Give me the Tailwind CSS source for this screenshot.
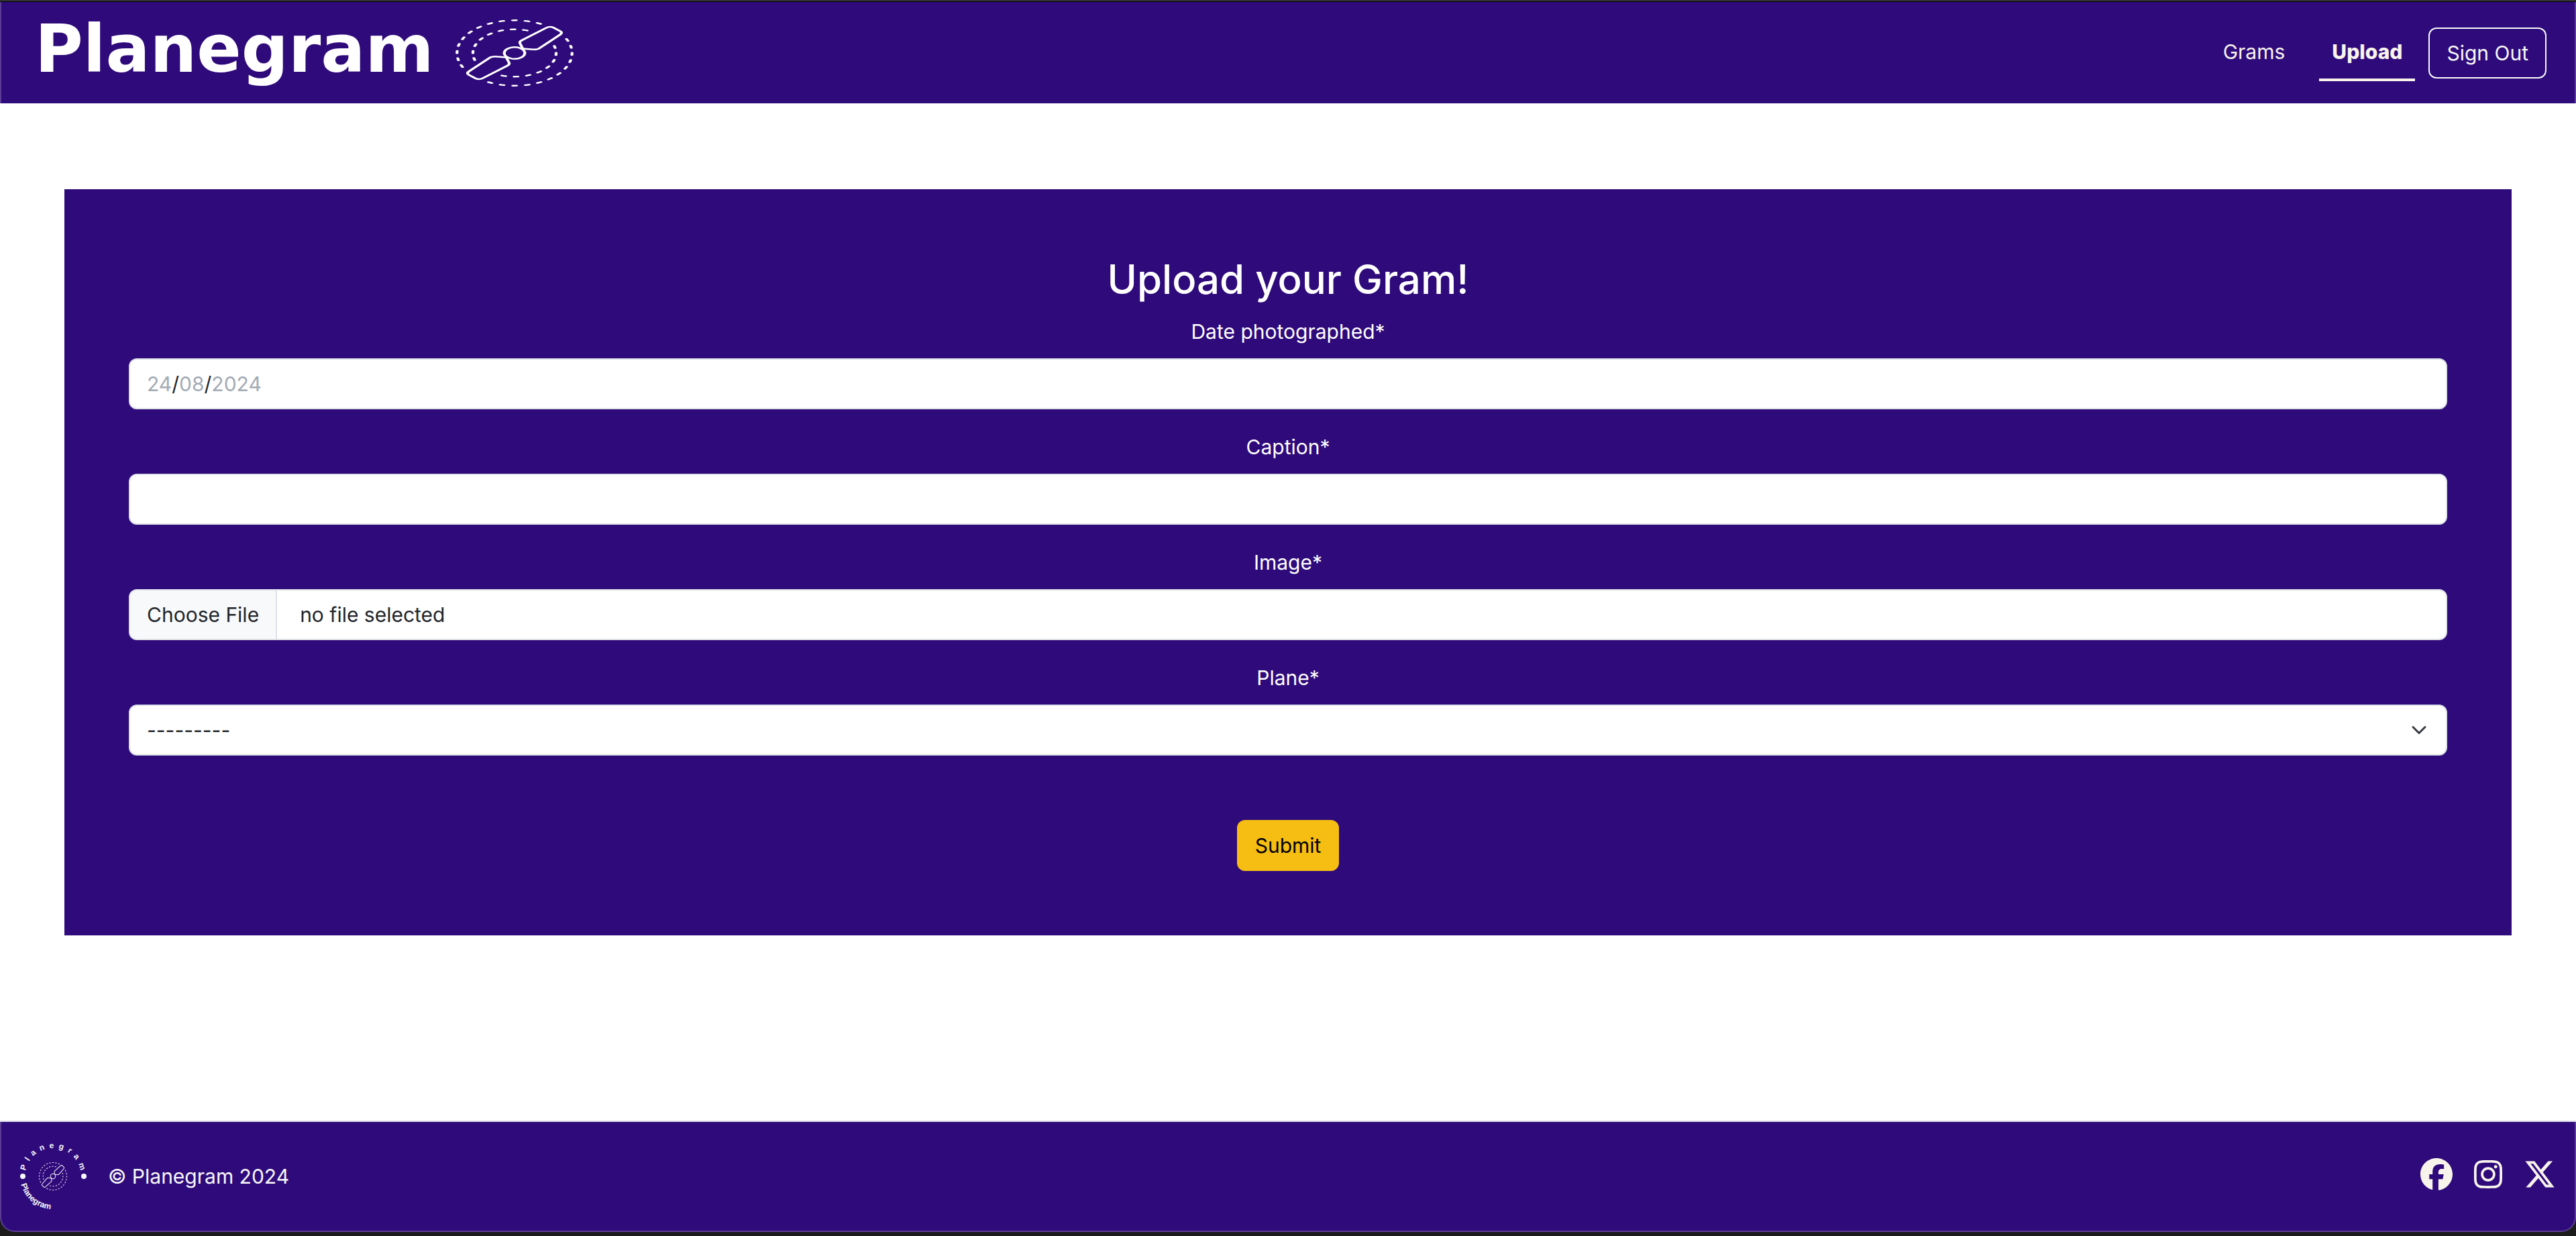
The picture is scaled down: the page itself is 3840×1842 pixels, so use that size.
<!DOCTYPE html>
<html lang="en">
<head>
<meta charset="utf-8">
<meta name="viewport" content="width=device-width, initial-scale=1">
<title>Planegram - Upload</title>
<script src="https://cdn.jsdelivr.net/npm/@tailwindcss/browser@4"></script>
</head>
<body class="flex min-h-screen flex-col bg-[#1b1c1b] pb-[6px] font-[Inter,sans-serif] text-[30px] leading-[48px] text-[#212529]">

<!-- Shared propeller drawing -->
<svg class="hidden" aria-hidden="true">
  <symbol id="propeller" viewBox="0 0 100 100" preserveAspectRatio="none">
    <g fill="none" stroke="currentColor" stroke-width="2.4" stroke-linecap="round" stroke-linejoin="round">
      <circle cx="50" cy="50" r="8.7"/>
      <path d="M57 43.5 L54.6 35.5 Q54 33 56.2 31 L77 12.3 Q80 9.8 82.8 12 L88.6 17.4 Q91 19.8 88.6 22.6 L71.5 42.4 Q69.5 45 66 44.7 L57 43.5"/>
      <path d="M72.1 6.6 A48.7 48.7 0 0 0 6.2 71.3" stroke-dasharray="3.3 7.4"/>
      <path d="M60.7 16.4 A35.3 35.3 0 0 0 16.4 60.7" stroke-dasharray="3.3 7.2"/>
      <g transform="rotate(180 50 50)">
        <path d="M57 43.5 L54.6 35.5 Q54 33 56.2 31 L77 12.3 Q80 9.8 82.8 12 L88.6 17.4 Q91 19.8 88.6 22.6 L71.5 42.4 Q69.5 45 66 44.7 L57 43.5"/>
        <path d="M72.1 6.6 A48.7 48.7 0 0 0 6.2 71.3" stroke-dasharray="3.3 7.4"/>
        <path d="M60.7 16.4 A35.3 35.3 0 0 0 16.4 60.7" stroke-dasharray="3.3 7.2"/>
      </g>
    </g>
  </symbol>
</svg>

<div class="h-[3px] border-b border-black bg-[#333533]"></div>

<header class="flex h-[151px] items-center justify-between border-x-2 border-[#5b3d95] bg-[#2f0a7b] pr-[42px] pl-[50px]">
  <a href="#" class="flex items-center gap-8 text-white">
    <span class="pb-3 font-['DejaVu_Sans'] text-[98px] leading-[98px] font-bold">Planegram</span>
    <svg class="h-[100px] w-[176px] overflow-visible" aria-hidden="true"><use href="#propeller"/></svg>
  </a>
  <nav class="flex items-center text-[#f8f4ec]">
    <a href="#" class="mr-8 border-b-4 border-transparent px-[19px] py-4">Grams</a>
    <a href="#" class="mr-5 border-b-4 border-[#f8f4ec] px-[19px] py-4 font-extrabold">Upload</a>
    <button type="button" class="h-[76px] rounded-xl border-2 border-[#f8f9fa] px-[25px] text-[#f8f9fa]">Sign Out</button>
  </nav>
</header>

<main class="flex-1 bg-white px-24 pt-32 pb-32">
  <form class="flex flex-col bg-[#2f0a7b] p-24 text-center text-white">
    <h1 class="mb-4 text-[60px] leading-[76px] font-medium">Upload your Gram!</h1>

    <label for="day" class="mb-4">Date photographed*</label>
    <div class="mb-8 flex h-[76px] items-center rounded-xl border-2 border-[#dee2e6] bg-white px-[25px] text-[#212529]">
      <input id="day" type="text" placeholder="24" class="field-sizing-content placeholder:text-[#a3abb4]"><span>/</span><input type="text" aria-label="Month" placeholder="08" class="field-sizing-content placeholder:text-[#a3abb4]"><span>/</span><input type="text" aria-label="Year" placeholder="2024" class="field-sizing-content placeholder:text-[#a3abb4]">
    </div>

    <label for="caption" class="mb-4">Caption*</label>
    <input id="caption" type="text" class="mb-8 h-[76px] rounded-xl border-2 border-[#dee2e6] bg-white px-[25px] text-[#212529]">

    <label for="image" class="mb-4">Image*</label>
    <div class="mb-8 h-[76px] overflow-hidden rounded-xl border-2 border-[#dee2e6] bg-white text-[#212529]">
      <input id="image" type="file" class="sr-only">
      <label for="image" class="flex h-full">
        <span class="flex items-center border-r-2 border-[#dee2e6] bg-[#f8f9fa] px-[25px]">Choose File</span>
        <span class="flex items-center pl-[34px]">no file selected</span>
      </label>
    </div>

    <label for="plane" class="mb-4">Plane*</label>
    <div class="relative mb-24 flex">
      <select id="plane" class="h-[76px] w-full appearance-none rounded-xl border-2 border-[#dee2e6] bg-white px-[25px] text-[#212529]">
        <option>---------</option>
      </select>
      <svg class="pointer-events-none absolute top-[26px] right-[30px] size-6" viewBox="0 0 16 16" fill="none" stroke="#343a40" stroke-width="2" stroke-linecap="round" stroke-linejoin="round" aria-hidden="true"><path d="m2 5 6 6 6-6"/></svg>
    </div>

    <button type="submit" class="h-[76px] self-center rounded-xl border-2 border-[#f6bd13] bg-[#f6bd13] px-[25px] text-black">Submit</button>
  </form>
</main>

<div class="border-t-2 border-[#dcdae6] bg-[#1b1c1b]">
<footer class="flex h-[164px] items-center justify-between rounded-b-[22px] border-x-2 border-b-2 border-[#5b3d95] bg-[#2f0a7b] pr-7 pl-[25px] text-[#f8f9fa]">
  <div class="flex items-center gap-[30px]">
    <!-- Round badge: name along the top, name along the lower left, propeller in the middle -->
    <svg class="size-[104px] overflow-visible" viewBox="0 0 104 104" role="img" aria-label="Planegram">
      <defs>
        <path id="arc-top" d="M10 52 A42 42 0 0 1 94 52"/>
        <path id="arc-bottom" d="M3 52 A49 49 0 0 0 101 52"/>
      </defs>
      <g fill="currentColor" class="font-['Liberation_Sans'] text-[12px] font-bold">
        <text text-anchor="middle"><textPath href="#arc-top" startOffset="50%">P&#160;&#160;l&#160;&#160;a&#160;&#160;n&#160;&#160;e&#160;&#160;g&#160;&#160;r&#160;&#160;a&#160;&#160;m</textPath></text>
        <text><textPath href="#arc-bottom" startOffset="12">Planegram</textPath></text>
      </g>
      <circle cx="7" cy="52" r="4" fill="currentColor"/>
      <circle cx="98" cy="52" r="4" fill="currentColor"/>
      <use href="#propeller" x="31" y="31" width="42" height="42"/>
    </svg>
    <p>© Planegram 2024</p>
  </div>
  <div class="mb-1.5 flex items-center gap-8 text-[#f8f4ec]">
    <a href="#" aria-label="Facebook"><svg class="size-12" viewBox="0 0 512 512" fill="currentColor"><path d="M512 256C512 114.600 397.400 0 256 0S0 114.600 0 256C0 376 82.700 476.800 194.200 504.500V334.200H141.400V256h52.800V222.300c0-87.100 39.400-127.500 125-127.500 16.200 0 44.200 3.200 55.700 6.400V172c-6-.6-16.500-1-29.600-1-42 0-58.200 15.900-58.200 57.200V256h83.600l-14.400 78.200H287V510.100C413.800 494.800 512 386.900 512 256z"/></svg></a>
    <a href="#" aria-label="Instagram"><svg class="h-12 w-[42px]" viewBox="0 0 448 512" fill="currentColor"><path d="M224.100 141c-63.600 0-114.900 51.300-114.900 114.900s51.300 114.900 114.900 114.900S339 319.500 339 255.900 287.700 141 224.100 141zm0 189.600c-41.100 0-74.700-33.500-74.700-74.700s33.500-74.700 74.700-74.700 74.700 33.500 74.700 74.700-33.600 74.700-74.700 74.700zm146.400-194.300c0 14.900-12 26.800-26.800 26.800-14.900 0-26.800-12-26.800-26.800s12-26.800 26.800-26.800 26.800 12 26.800 26.800zm76.100 27.200c-1.700-35.900-9.900-67.700-36.200-93.900-26.200-26.200-58-34.400-93.900-36.200-37-2.100-147.900-2.100-184.900 0-35.800 1.700-67.600 9.900-93.900 36.100s-34.400 58-36.200 93.900c-2.100 37-2.100 147.900 0 184.900 1.700 35.900 9.900 67.700 36.200 93.900s58 34.400 93.900 36.200c37 2.100 147.900 2.100 184.900 0 35.900-1.700 67.700-9.900 93.900-36.200 26.200-26.200 34.400-58 36.200-93.900 2.100-37 2.100-147.800 0-184.800zM398.800 388c-7.800 19.600-22.900 34.700-42.600 42.600-29.500 11.700-99.500 9-132.100 9s-102.700 2.600-132.100-9c-19.600-7.800-34.700-22.900-42.600-42.600-11.700-29.500-9-99.500-9-132.100s-2.600-102.700 9-132.100c7.800-19.600 22.900-34.700 42.600-42.600 29.500-11.700 99.500-9 132.100-9s102.700-2.600 132.100 9c19.600 7.800 34.700 22.900 42.600 42.600 11.700 29.500 9 99.500 9 132.100s2.700 102.700-9 132.100z"/></svg></a>
    <a href="#" aria-label="X"><svg class="size-12" viewBox="0 0 512 512" fill="currentColor"><path d="M389.200 48h70.600L305.600 224.200 487 464H345L233.700 318.600 106.500 464H35.800L200.700 275.500 26.800 48H172.400L272.900 180.900 389.200 48zM364.400 421.800h39.100L151.100 88h-42L364.400 421.800z"/></svg></a>
  </div>
</footer>
</div>
</body>
</html>
